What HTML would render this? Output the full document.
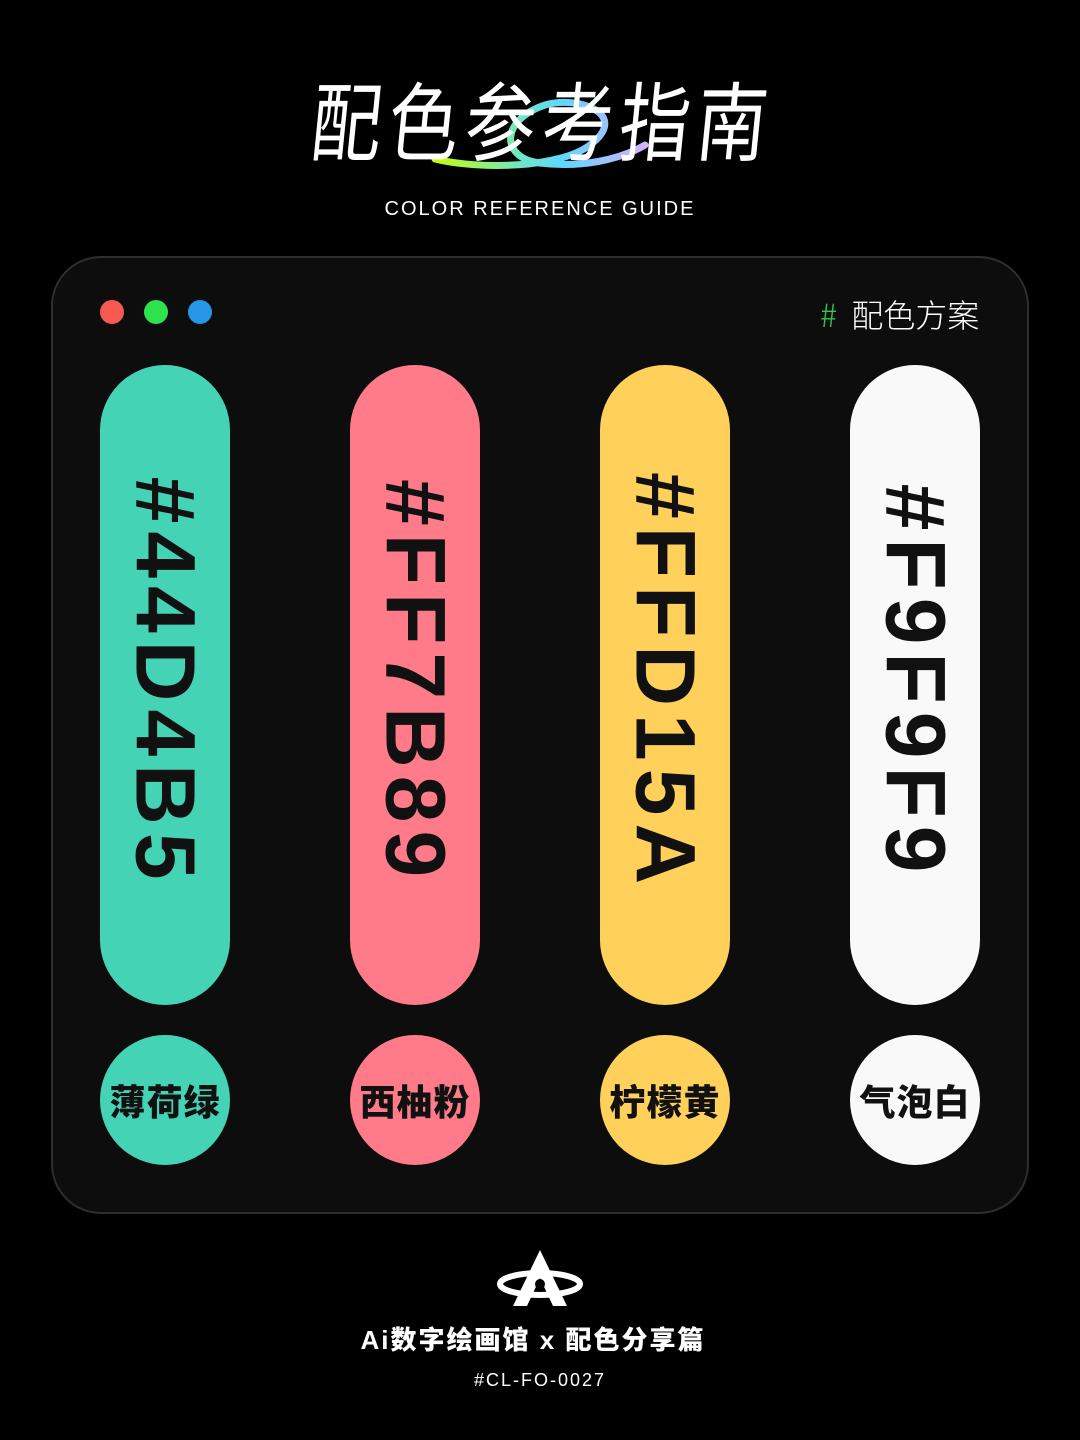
<!DOCTYPE html>
<html><head><meta charset="utf-8"><style>
*{margin:0;padding:0;box-sizing:border-box}
body{width:1080px;height:1440px;background:#000;position:relative;overflow:hidden;font-family:"Liberation Sans","Noto Sans CJK SC",sans-serif;color:#fff}
.title{position:absolute;top:62px;left:0;width:1080px;text-align:center;font-size:86px;letter-spacing:8px;text-indent:8px;font-weight:400;font-family:"Noto Sans CJK SC",sans-serif;line-height:110px;transform:scaleX(0.82) skewX(-7deg)}
.sub{position:absolute;top:198px;left:0;width:1080px;text-align:center;font-size:20px;letter-spacing:2px}
.card{position:absolute;left:51px;top:256px;width:978px;height:958px;border-radius:50px;background:#0d0d0d;border:2px solid #2e2e2e}
.dot{position:absolute;top:300px;width:24px;height:24px;border-radius:50%}
.tag{position:absolute;top:291px;left:820px;font-size:32px;font-family:"Noto Sans CJK SC",sans-serif;font-weight:300}
.pill{position:absolute;top:365px;width:130px;height:640px;border-radius:65px}
.pill span{position:absolute;left:50%;top:50%;transform:translate(-50%,-53%) rotate(90deg);white-space:nowrap;font-weight:900;font-size:84px;letter-spacing:8px;color:#111;font-family:"Liberation Sans",sans-serif}
.circ{position:absolute;top:1035px;width:130px;height:130px;border-radius:50%;display:flex;align-items:center;justify-content:center;color:#111;font-weight:900;font-size:36px;font-family:"Noto Sans CJK SC",sans-serif;letter-spacing:1px}
.foot{position:absolute;top:1320px;left:0;width:1080px;text-align:center;font-size:26px;font-weight:900;font-family:"Liberation Sans","Noto Sans CJK SC",sans-serif;letter-spacing:2px;padding-right:14px}
.code{position:absolute;top:1370px;left:0;width:1080px;text-align:center;font-size:18px;letter-spacing:2px}
</style></head><body>
<svg style="position:absolute;left:0;top:0" width="1080" height="240">
<defs><linearGradient id="g" x1="430" y1="0" x2="650" y2="0" gradientUnits="userSpaceOnUse">
<stop offset="0" stop-color="#c8ff00"/><stop offset="0.4" stop-color="#6fe8c0"/><stop offset="0.6" stop-color="#5fd6ff"/><stop offset="1" stop-color="#d7b0ff"/></linearGradient></defs>
<path d="M435 159 C480 170 560 168 590 145 C630 115 580 95 545 105 C500 120 500 158 540 163 C580 168 620 160 645 145" fill="none" stroke="url(#g)" stroke-width="7" stroke-linecap="round"/>
</svg>
<div class="title">配色参考指南</div>
<div class="sub">COLOR REFERENCE GUIDE</div>
<div class="card"></div>
<div class="dot" style="left:100px;background:#f65a50"></div>
<div class="dot" style="left:144px;background:#2ee24e"></div>
<div class="dot" style="left:188px;background:#2896e6"></div>
<div class="tag"><span style="color:#2ec84a">#</span>&nbsp; 配色方案</div>
<div class="pill" style="left:100px;background:#44D4B5"><span>#44D4B5</span></div>
<div class="pill" style="left:350px;background:#FF7B89"><span>#FF7B89</span></div>
<div class="pill" style="left:600px;background:#FFD15A"><span>#FFD15A</span></div>
<div class="pill" style="left:850px;background:#F9F9F9"><span>#F9F9F9</span></div>
<div class="circ" style="left:100px;background:#44D4B5">薄荷绿</div>
<div class="circ" style="left:350px;background:#FF7B89">西柚粉</div>
<div class="circ" style="left:600px;background:#FFD15A">柠檬黄</div>
<div class="circ" style="left:850px;background:#F9F9F9">气泡白</div>
<svg style="position:absolute;left:495px;top:1248px" width="90" height="60" viewBox="0 0 90 60">
<ellipse cx="45" cy="36" rx="40" ry="11" fill="none" stroke="#fff" stroke-width="6"/>
<path d="M45 2 L18 58 L32 58 L45 30 L58 58 L72 58 Z" fill="#fff"/>
<circle cx="45" cy="36" r="5" fill="#000"/>
</svg>
<div class="foot">Ai数字绘画馆 x 配色分享篇</div>
<div class="code">#CL-FO-0027</div>
</body></html>
